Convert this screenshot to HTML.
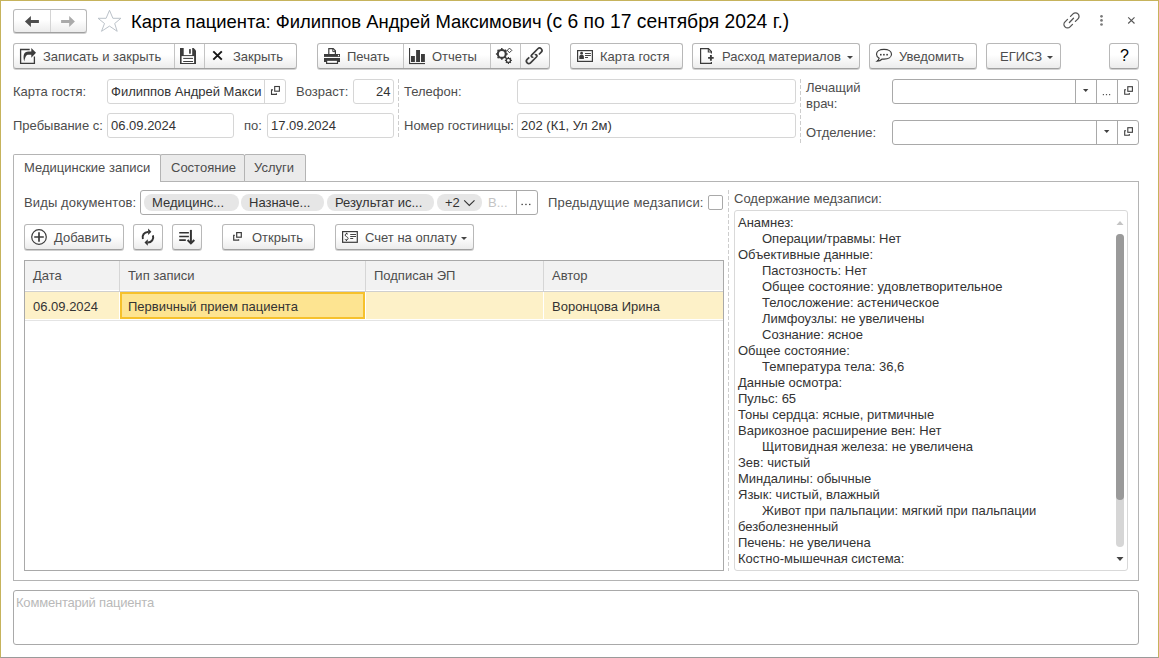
<!DOCTYPE html>
<html><head><meta charset="utf-8">
<style>
*{box-sizing:border-box;margin:0;padding:0}
html,body{width:1159px;height:658px;overflow:hidden;background:#fff}
body{font-family:"Liberation Sans",sans-serif;font-size:13px;color:#4d4d4d;position:relative}
.a{position:absolute;white-space:nowrap}
.win{position:absolute;left:0;top:0;width:1159px;height:658px;border-top:1px solid #c6b35c;border-left:1px solid #c6b35c;border-right:1px solid #c6b35c;border-bottom:1px solid #9a9a9a}
.btn{position:absolute;height:26px;border:1px solid #b8b8b8;border-bottom-color:#a0a0a0;border-radius:3px;background:linear-gradient(#fff 0%,#fff 45%,#ececec 100%);box-shadow:0 1px 0 rgba(0,0,0,.18)}
.sep{position:absolute;width:1px;background:#c4c4c4}
.fld{position:absolute;height:25px;border:1px solid #d6d6d6;border-radius:3px;background:#fff}
.fld.ed{border-color:#a9a9a9}
.t{position:absolute;white-space:nowrap;color:#4d4d4d;line-height:16px;margin-top:1px}
.v{position:absolute;white-space:nowrap;color:#333;line-height:16px;margin-top:1px}
.dash{position:absolute;width:1px;background:repeating-linear-gradient(#cdcdcd 0 4px,transparent 4px 6px)}
svg{position:absolute;overflow:visible}
</style></head><body>
<div class="win"></div>

<!-- ===== TITLE BAR ===== -->
<div class="btn" style="left:13px;top:9px;width:74px;height:24px"></div>
<div class="sep" style="left:50px;top:10px;height:22px;background:#d4d4d4"></div>
<div class="a" style="left:131px;top:8px;font-size:18.46px;color:#000;line-height:28px">Карта пациента: Филиппов Андрей Максимович</div>
<div class="a" style="left:546px;top:8px;font-size:19.3px;color:#000;line-height:28px">(с 6 по 17 сентября 2024 г.)</div>


<!-- ===== TOOLBAR ===== -->
<div class="btn" style="left:13px;top:43px;width:284px"></div>
<div class="sep" style="left:174px;top:44px;height:24px"></div>
<div class="sep" style="left:204px;top:44px;height:24px"></div>
<div class="t" style="left:43px;top:48px">Записать и закрыть</div>
<div class="t" style="left:233px;top:48px">Закрыть</div>

<div class="btn" style="left:317px;top:43px;width:233px"></div>
<div class="sep" style="left:403px;top:44px;height:24px"></div>
<div class="sep" style="left:490px;top:44px;height:24px"></div>
<div class="sep" style="left:520px;top:44px;height:24px"></div>
<div class="t" style="left:347px;top:48px">Печать</div>
<div class="t" style="left:432px;top:48px">Отчеты</div>

<div class="btn" style="left:570px;top:43px;width:113px"></div>
<div class="t" style="left:600px;top:48px">Карта гостя</div>

<div class="btn" style="left:692px;top:43px;width:168px"></div>
<div class="t" style="left:722px;top:48px">Расход материалов</div>

<div class="btn" style="left:869px;top:43px;width:108px"></div>
<div class="t" style="left:899px;top:48px">Уведомить</div>

<div class="btn" style="left:986px;top:43px;width:75px"></div>
<div class="t" style="left:1000px;top:48px">ЕГИСЗ</div>

<div class="btn" style="left:1109px;top:43px;width:30px"></div>
<div class="a" style="left:1120px;top:47px;color:#000;font-size:16px;line-height:18px">?</div>

<!-- ===== HEADER FIELDS ===== -->
<div class="t" style="left:13px;top:83px">Карта гостя:</div>
<div class="fld" style="left:107px;top:79px;width:179px"></div>
<div class="sep" style="left:264px;top:80px;height:23px;background:#d6d6d6"></div>
<div class="v" style="left:111px;top:83px">Филиппов Андрей Макси</div>
<div class="t" style="left:296px;top:83px">Возраст:</div>
<div class="fld" style="left:353px;top:79px;width:41px"></div>
<div class="v" style="left:376px;top:83px">24</div>
<div class="dash" style="left:398px;top:79px;height:58px"></div>
<div class="t" style="left:404px;top:83px">Телефон:</div>
<div class="fld" style="left:517px;top:79px;width:279px"></div>
<div class="dash" style="left:800px;top:79px;height:64px"></div>
<div class="t" style="left:806px;top:79px">Лечащий</div>
<div class="t" style="left:806px;top:95px">врач:</div>
<div class="fld ed" style="left:892px;top:79px;width:247px"></div>
<div class="sep" style="left:1075px;top:80px;height:23px;background:#a9a9a9"></div>
<div class="sep" style="left:1096px;top:80px;height:23px;background:#a9a9a9"></div>
<div class="sep" style="left:1117px;top:80px;height:23px;background:#a9a9a9"></div>

<div class="t" style="left:13px;top:117px">Пребывание с:</div>
<div class="fld" style="left:107px;top:113px;width:127px"></div>
<div class="v" style="left:111px;top:117px">06.09.2024</div>
<div class="t" style="left:244px;top:117px">по:</div>
<div class="fld" style="left:267px;top:113px;width:127px"></div>
<div class="v" style="left:271px;top:117px">17.09.2024</div>
<div class="t" style="left:404px;top:117px">Номер гостиницы:</div>
<div class="fld" style="left:517px;top:113px;width:279px"></div>
<div class="v" style="left:521px;top:117px">202 (К1, Ул 2м)</div>
<div class="t" style="left:806px;top:124px">Отделение:</div>
<div class="fld ed" style="left:892px;top:120px;width:247px"></div>
<div class="sep" style="left:1096px;top:121px;height:23px;background:#a9a9a9"></div>
<div class="sep" style="left:1117px;top:121px;height:23px;background:#a9a9a9"></div>


<!-- ===== PANEL ===== -->
<div style="position:absolute;left:13px;top:181px;width:1126px;height:400px;border:1px solid #b4b4b4"></div>
<div style="position:absolute;left:160px;top:154px;width:85px;height:28px;border:1px solid #b4b4b4;border-radius:2px 2px 0 0;background:#ebebeb"></div>
<div style="position:absolute;left:244px;top:154px;width:62px;height:28px;border:1px solid #b4b4b4;border-radius:2px 2px 0 0;background:#ebebeb"></div>
<div style="position:absolute;left:13px;top:154px;width:148px;height:28px;border:1px solid #b4b4b4;border-bottom:none;border-radius:2px 2px 0 0;background:#fff"></div>
<div class="t" style="left:24px;top:159px">Медицинские записи</div>
<div class="t" style="left:171px;top:159px">Состояние</div>
<div class="t" style="left:254px;top:159px">Услуги</div>

<div class="t" style="left:24px;top:194px;letter-spacing:0.12px">Виды документов:</div>
<div class="fld ed" style="left:140px;top:190px;width:398px"></div>
<div class="sep" style="left:516px;top:191px;height:23px;background:#a9a9a9"></div>
<div class="a" style="left:144px;top:194px;width:95px;height:17px;border-radius:8px;background:#e6e6e6"></div>
<div class="a" style="left:241px;top:194px;width:83px;height:17px;border-radius:8px;background:#e6e6e6"></div>
<div class="a" style="left:327px;top:194px;width:107px;height:17px;border-radius:8px;background:#e6e6e6"></div>
<div class="a" style="left:437px;top:194px;width:45px;height:17px;border-radius:8px;background:#e6e6e6"></div>
<div class="v" style="left:152px;top:194px">Медицинс...</div>
<div class="v" style="left:249px;top:194px">Назначе...</div>
<div class="v" style="left:335px;top:194px">Результат ис...</div>
<div class="v" style="left:445px;top:194px">+2</div>
<div class="t" style="left:488px;top:194px;color:#c4c4c4">В...</div>
<div class="t" style="left:548px;top:194px;letter-spacing:0.19px">Предыдущие медзаписи:</div>
<div style="position:absolute;left:708px;top:195px;width:15px;height:15px;border:1px solid #a9a9a9;border-radius:2px;background:#fff"></div>
<div class="dash" style="left:728px;top:190px;height:381px"></div>

<div class="btn" style="left:24px;top:224px;width:100px"></div>
<div class="t" style="left:54px;top:229px">Добавить</div>
<div class="btn" style="left:133px;top:224px;width:30px"></div>
<div class="btn" style="left:172px;top:224px;width:30px"></div>
<div class="btn" style="left:222px;top:224px;width:93px"></div>
<div class="t" style="left:252px;top:229px">Открыть</div>
<div class="btn" style="left:335px;top:224px;width:139px"></div>
<div class="t" style="left:365px;top:229px">Счет на оплату</div>

<div style="position:absolute;left:24px;top:260px;width:700px;height:311px;border:1px solid #a9a9a9;background:#fff"></div>
<div class="a" style="left:25px;top:261px;width:94px;height:29px;background:#f2f2f2"></div>
<div class="a" style="left:120px;top:261px;width:245px;height:29px;background:#f2f2f2"></div>
<div class="a" style="left:366px;top:261px;width:177px;height:29px;background:#f2f2f2"></div>
<div class="a" style="left:544px;top:261px;width:179px;height:29px;background:#f2f2f2"></div>
<div class="a" style="left:119px;top:261px;width:1px;height:30px;background:#d6d6d6"></div>
<div class="a" style="left:365px;top:261px;width:1px;height:30px;background:#d6d6d6"></div>
<div class="a" style="left:543px;top:261px;width:1px;height:30px;background:#d6d6d6"></div>
<div class="a" style="left:25px;top:291px;width:698px;height:1px;background:#cfcfcf"></div>
<div class="a" style="left:25px;top:292px;width:94px;height:27px;background:#fdf1c8"></div>
<div class="a" style="left:366px;top:292px;width:177px;height:27px;background:#fdf1c8"></div>
<div class="a" style="left:544px;top:292px;width:179px;height:27px;background:#fdf1c8"></div>
<div class="a" style="left:25px;top:320px;width:698px;height:1px;background:#e4e4e4"></div>
<div class="a" style="left:120px;top:292px;width:245px;height:27px;background:#fde491;border:2px solid #f6c12c"></div>
<div class="t" style="left:33px;top:267px">Дата</div>
<div class="t" style="left:128px;top:267px">Тип записи</div>
<div class="t" style="left:374px;top:267px">Подписан ЭП</div>
<div class="t" style="left:552px;top:267px">Автор</div>
<div class="v" style="left:33px;top:298px">06.09.2024</div>
<div class="v" style="left:128px;top:298px">Первичный прием пациента</div>
<div class="v" style="left:552px;top:298px">Воронцова Ирина</div>

<div class="t" style="left:734px;top:190px">Содержание медзаписи:</div>
<div style="position:absolute;left:734px;top:210px;width:394px;height:361px;border:1px solid #d9d9d9;border-radius:3px;background:#fff"></div>
<div class="v" style="left:738px;top:214px">Анамнез:</div>
<div class="v" style="left:762px;top:230px">Операции/травмы: Нет</div>
<div class="v" style="left:738px;top:246px">Объективные данные:</div>
<div class="v" style="left:762px;top:262px">Пастозность: Нет</div>
<div class="v" style="left:762px;top:278px">Общее состояние: удовлетворительное</div>
<div class="v" style="left:762px;top:294px">Телосложение: астеническое</div>
<div class="v" style="left:762px;top:310px">Лимфоузлы: не увеличены</div>
<div class="v" style="left:762px;top:326px">Сознание: ясное</div>
<div class="v" style="left:738px;top:342px">Общее состояние:</div>
<div class="v" style="left:762px;top:358px">Температура тела: 36,6</div>
<div class="v" style="left:738px;top:374px">Данные осмотра:</div>
<div class="v" style="left:738px;top:390px">Пульс: 65</div>
<div class="v" style="left:738px;top:406px">Тоны сердца: ясные, ритмичные</div>
<div class="v" style="left:738px;top:422px">Варикозное расширение вен: Нет</div>
<div class="v" style="left:762px;top:438px">Щитовидная железа: не увеличена</div>
<div class="v" style="left:738px;top:454px">Зев: чистый</div>
<div class="v" style="left:738px;top:470px">Миндалины: обычные</div>
<div class="v" style="left:738px;top:486px">Язык: чистый, влажный</div>
<div class="v" style="left:762px;top:502px">Живот при пальпации: мягкий при пальпации</div>
<div class="v" style="left:738px;top:518px">безболезненный</div>
<div class="v" style="left:738px;top:534px">Печень: не увеличена</div>
<div class="v" style="left:738px;top:550px">Костно-мышечная система:</div>

<div class="a" style="left:1116px;top:234px;width:8px;height:313px;border-radius:4px;background:#d6d6d6"></div>
<div class="a" style="left:1116px;top:234px;width:8px;height:266px;border-radius:4px;background:#9a9a9a"></div>

<div style="position:absolute;left:13px;top:590px;width:1126px;height:55px;border:1px solid #a9a9a9;border-radius:3px;background:#fff"></div>
<div class="t" style="left:16px;top:594px;color:#b9b9b9;letter-spacing:-0.2px">Комментарий пациента</div>

<!-- ===== ICON OVERLAY (page coordinates) ===== -->
<svg style="left:0;top:0" width="1159" height="658" viewBox="0 0 1159 658">
<!-- nav arrows -->
<path d="M24.9 21.5 L30.9 16.1 V20 H38.9 V22.9 H30.9 V27 Z" fill="#4d4d4d"/>
<path d="M74.9 21.5 L69.2 16.1 V20 H61.1 V22.9 H69.2 V27 Z" fill="#aaaaaa"/>
<!-- star -->
<path d="M109.5 10.3 L112.9 18.3 L120.9 18.3 L114.7 23.5 L117.2 31.3 L109.5 26.1 L101.5 31.3 L104.5 23.5 L98.1 18.3 L106.1 18.3 Z" fill="none" stroke="#b3bbc3" stroke-width="0.9" stroke-linejoin="round"/>
<!-- title link / dots / close -->
<g fill="none" stroke="#555" stroke-width="1.3" stroke-linecap="round">
<path d="M1069.4 22.5 L1073.5 18.2"/>
<path d="M1070.5 16.4 L1073 13.9 A3.5 3.5 0 0 1 1078 18.9 L1075.4 21.4"/>
<path d="M1072.5 24.4 L1070 26.9 A3.5 3.5 0 0 1 1065 21.9 L1067.5 19.4"/>
</g>
<g fill="#7a7a7a"><circle cx="1101.5" cy="16.3" r="1.35"/><circle cx="1101.5" cy="20.4" r="1.35"/><circle cx="1101.5" cy="24.5" r="1.35"/></g>
<path d="M1128.2 17.3 L1134.5 23.5 M1134.5 17.3 L1128.2 23.5" stroke="#555" stroke-width="1.1"/>

<!-- Записать и закрыть -->
<path d="M29.7 49.5 H20.6 V63.3 H34.4 V56.6" fill="none" stroke="#3c3c3c" stroke-width="1.3"/>
<path d="M24.3 61.5 C22.6 55.5 23.8 51.4 28.5 51.4 H31.3 V48 L36 52.8 L31.3 57.7 V54.7 H28.5 C26.3 54.7 25.2 56.5 24.3 61.5 Z" fill="#3c3c3c"/>
<!-- save -->
<path d="M180 48 H193.6 L196 50.4 V64 H180 Z" fill="#3c3c3c"/>
<rect x="183.7" y="48" width="8.5" height="7.1" fill="#fff"/>
<rect x="189.1" y="49.1" width="1.7" height="4.6" fill="#3c3c3c"/>
<rect x="181.6" y="56.1" width="12.5" height="6.9" fill="#fff"/>
<rect x="183.2" y="57.9" width="9.8" height="1" fill="#3c3c3c"/>
<rect x="183.2" y="61" width="9.8" height="1" fill="#3c3c3c"/>
<!-- close X -->
<path d="M213.3 51.4 L221.8 59.6 M221.8 51.4 L213.3 59.6" stroke="#161616" stroke-width="2"/>
<!-- printer -->
<path d="M328.8 54 V48.6 H333.2 L335.4 50.8 V54" fill="#fff" stroke="#3c3c3c" stroke-width="1.2"/>
<path d="M332.8 48.6 V51.6 H335.4" fill="none" stroke="#3c3c3c" stroke-width="1"/>
<rect x="324" y="54" width="16" height="2.9" fill="#3c3c3c"/>
<circle cx="338.5" cy="55.5" r="0.65" fill="#fff"/>
<rect x="324" y="58" width="16" height="4" fill="#3c3c3c"/>
<rect x="326.6" y="60.2" width="10.9" height="3.2" fill="#fff" stroke="#3c3c3c" stroke-width="1.2"/>
<!-- chart -->
<g fill="#3c3c3c"><rect x="409" y="48" width="1.1" height="16"/><rect x="409" y="63" width="16" height="1.1"/><rect x="411" y="56" width="3.9" height="6"/><rect x="416.1" y="50" width="3.9" height="12"/><rect x="421" y="54" width="3.9" height="8"/></g>
<!-- gears -->
<g transform="translate(501.8,53.9)">
<circle r="5" fill="#3c3c3c"/>
<g stroke="#3c3c3c" stroke-width="1.5"><path d="M0 -5.9 V5.9 M-5.9 0 H5.9 M-4.2 -4.2 L4.2 4.2 M4.2 -4.2 L-4.2 4.2"/></g>
<circle r="2.9" fill="#fff"/>
</g>
<g transform="translate(508.4,60.4)">
<circle r="2.7" fill="#3c3c3c"/>
<g stroke="#3c3c3c" stroke-width="1.2"><path d="M0 -3.5 V3.5 M-3.5 0 H3.5 M-2.5 -2.5 L2.5 2.5 M2.5 -2.5 L-2.5 2.5"/></g>
<circle r="1.4" fill="#fff"/>
</g>
<path d="M506 51.4 L507.4 50.4" stroke="#3c3c3c" stroke-width="1"/>
<path d="M509.5 48.1 L511.8 50.4 L509.5 52.7 L507.2 50.4 Z" fill="#fff" stroke="#3c3c3c" stroke-width="1"/>
<!-- link toolbar -->
<g transform="translate(534.1,55.9) rotate(-45)" fill="none" stroke="#3c3c3c" stroke-width="1.7">
<path d="M4.4 2.4 H7.7 A2.4 2.4 0 0 0 7.7 -2.4 H-1.2 A1.2 1.2 0 0 0 -1.2 0"/>
<path d="M-4.4 -2.4 H-7.45 A2.4 2.4 0 0 0 -7.45 2.4 H1.2 A1.2 1.2 0 0 0 1.2 0"/>
</g>
<!-- card -->
<rect x="577.6" y="50.6" width="14.8" height="10.8" fill="none" stroke="#3c3c3c" stroke-width="1.2"/>
<circle cx="581.6" cy="53.2" r="1.35" fill="#3c3c3c"/>
<path d="M579.3 58.9 V56.6 C579.3 55.4 580.4 54.8 581.6 54.8 C582.8 54.8 583.9 55.4 583.9 56.6 V58.9 Z" fill="#3c3c3c"/>
<g fill="#3c3c3c"><rect x="585" y="53" width="5.9" height="0.95"/><rect x="585" y="55" width="5.9" height="0.95"/><rect x="585" y="57" width="3" height="0.95"/></g>
<!-- doc plus -->
<path d="M711.4 53.6 V51.6 L708.4 48.6 H700.6 V63.3 H711.4 V62" fill="none" stroke="#3c3c3c" stroke-width="1.2"/>
<path d="M708.3 48.6 V52 H711.4" fill="none" stroke="#3c3c3c" stroke-width="1.1"/>
<path d="M708.1 57.9 H713.7 M710.9 55.1 V60.7" stroke="#3c3c3c" stroke-width="1.9"/>
<path d="M847 56 H853 L850 59 Z" fill="#444"/>
<!-- speech -->
<path d="M884 49.3 C879.6 49.3 876.5 51.4 876.5 54.2 C876.5 55.8 877.4 57.2 879.2 58.2 C879 59.2 878.3 60.3 877.1 61.2 C879.3 61.1 881 60.3 882.2 59 C882.8 59.1 883.4 59.1 884 59.1 C888.4 59.1 891.5 57 891.5 54.2 C891.5 51.4 888.4 49.3 884 49.3 Z" fill="none" stroke="#3c3c3c" stroke-width="1.15"/>
<g fill="#3c3c3c"><rect x="880" y="53.9" width="1.6" height="1.6"/><rect x="883.1" y="53.9" width="1.6" height="1.6"/><rect x="886.3" y="53.9" width="1.6" height="1.6"/></g>
<path d="M1047 56 H1053 L1050 59 Z" fill="#444"/>

<!-- field icons -->
<g fill="none" stroke="#3c3c3c" stroke-width="1.1">
<rect x="274.7" y="86.5" width="4.7" height="4.7"/><path d="M273 89.9 H271.5 V94.4 H276.4 V93.2"/>
<rect x="1127.8" y="86.7" width="4.6" height="4.6"/><path d="M1126 89.8 H1124.7 V94.2 H1129.3 V93"/>
<rect x="1127.8" y="127.7" width="4.6" height="4.6"/><path d="M1126 130.8 H1124.7 V135.2 H1129.3 V134"/>
<rect x="236.7" y="232.6" width="4.6" height="4.6" stroke-width="1.2"/><path d="M234.8 235.4 H233.7 V240.1 H238.6 V239.2" stroke-width="1.2"/>
</g>
<path d="M1083 89 H1088.4 L1085.7 91.9 Z" fill="#404040"/>
<path d="M1104 130 H1109.4 L1106.7 132.9 Z" fill="#404040"/>
<g fill="#555"><rect x="1102.8" y="94" width="1.2" height="1.2"/><rect x="1105.9" y="94" width="1.2" height="1.2"/><rect x="1109" y="94" width="1.2" height="1.2"/></g>

<!-- tag chevron & ... -->
<path d="M464.2 200.3 L469.3 205.4 L474.5 200.3" fill="none" stroke="#333" stroke-width="1.1"/>
<g fill="#333"><rect x="521.5" y="203.8" width="1.3" height="1.3"/><rect x="525.3" y="203.8" width="1.3" height="1.3"/><rect x="529.1" y="203.8" width="1.3" height="1.3"/></g>

<!-- plus circle -->
<circle cx="39" cy="237" r="7.3" fill="none" stroke="#3c3c3c" stroke-width="1.2"/>
<path d="M34.2 237 H43.8 M39 232.2 V241.8" stroke="#3c3c3c" stroke-width="1.7"/>
<!-- refresh -->
<g fill="none" stroke="#333" stroke-width="2"><path d="M142.9 239 A5.3 5.3 0 0 1 148 231.9"/><path d="M152.9 235.4 A5.3 5.3 0 0 1 147.8 242.5"/></g>
<path d="M151.4 231.8 L148.1 228.6 V235 Z" fill="#333"/>
<path d="M144.5 242.5 L147.8 239.3 V245.7 Z" fill="#333"/>
<!-- sort -->
<g stroke="#333" stroke-width="1.6"><path d="M179.2 232.8 H188.9 M179.2 236.5 H188.9 M179.2 240.1 H185.8"/></g>
<path d="M190.9 229.9 V242.5" stroke="#333" stroke-width="2"/>
<path d="M187.6 240 L190.9 243.4 L194.3 240" fill="none" stroke="#333" stroke-width="2"/>
<!-- invoice -->
<rect x="342.6" y="231.6" width="14.7" height="10.7" fill="none" stroke="#3c3c3c" stroke-width="1.2"/>
<path d="M348 234.3 C347.4 233.5 345.3 233.4 345.1 235 C344.9 236.6 348.2 236.6 348.1 238.6 C347.9 240.2 345.7 240.1 344.8 239.3 M346.5 232.8 V234 M346.5 239.8 V241.1" fill="none" stroke="#3c3c3c" stroke-width="1"/>
<g fill="#3c3c3c"><rect x="350.2" y="234" width="5.8" height="0.95"/><rect x="350.2" y="236" width="5.8" height="0.95"/><rect x="350.2" y="238" width="3" height="0.95"/></g>
<path d="M461 237 H467 L464 240 Z" fill="#444"/>

<!-- scroll arrows -->
<path d="M1116.5 225 H1123.5 L1120 221 Z" fill="#c4c4c4"/>
<path d="M1116.5 557 H1123.5 L1120 561 Z" fill="#444"/>
</svg>


</body></html>
